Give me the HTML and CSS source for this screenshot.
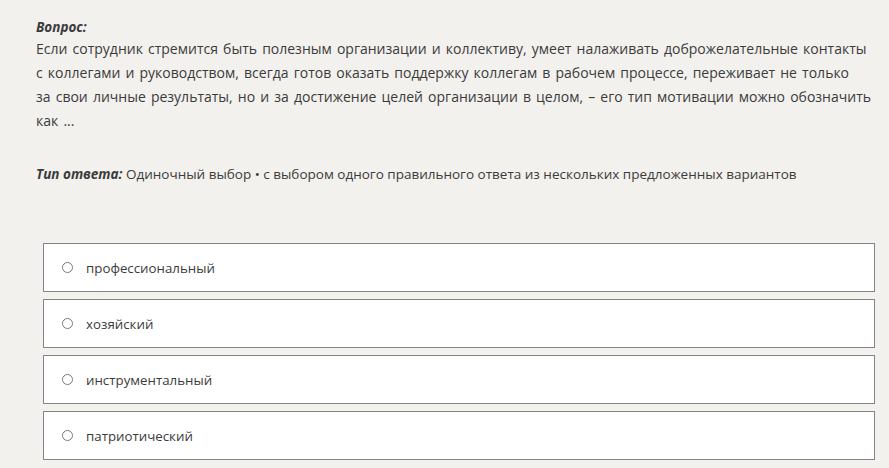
FILE: index.html
```html
<!DOCTYPE html>
<html lang="ru">
<head>
    <meta charset="UTF-8">
    <title>Вопрос</title>
    <link rel="stylesheet" href="styles.css">
</head>
<body>
    <div class="question">
        <div class="label">Вопрос:</div>
        <div class="question-text">Если сотрудник стремится быть полезным организации и коллективу, умеет налаживать доброжелательные контакты<br>
            с коллегами и руководством, всегда готов оказать поддержку коллегам в рабочем процессе, переживает не только<br>
            за свои личные результаты, но и за достижение целей организации в целом, – его тип мотивации можно обозначить<br>
            как ...</div>

        <div class="answer-type"><span class="label">Тип ответа:</span> Одиночный выбор • с выбором одного правильного ответа из нескольких предложенных вариантов</div>
    </div>

    <div class="options">
        <label class="option"><span class="radio"></span>профессиональный</label>
        <label class="option"><span class="radio"></span>хозяйский</label>
        <label class="option"><span class="radio"></span>инструментальный</label>
        <label class="option"><span class="radio"></span>патриотический</label>
    </div>
</body>
</html>
```

FILE: styles.css
```css
body {
    margin: 0;
    background-color: #f2f1ee;
    color: #3b3b3b;
    font-family: "Open Sans", "Noto Sans", sans-serif;
}

.question {
    padding: 17px 0 0 36px;
}

.label {
    font-weight: bold;
    font-style: italic;
    font-size: 13.5px;
    line-height: 20px;
}

.question-text {
    font-size: 14px;
    word-spacing: 1.5px;
    line-height: 24px;
    white-space: nowrap;
}

.answer-type {
    margin-top: 31px;
    font-size: 13.5px;
    line-height: 20px;
}

.answer-type .label {
    font-size: 13.5px;
}

.options {
    margin: 59px 14px 0 43px;
    display: flex;
    flex-direction: column;
    gap: 7px;
}

.option {
    display: flex;
    align-items: center;
    height: 47px;
    background-color: #fff;
    border: 1px solid #858585;
    padding-left: 18px;
    font-size: 13.3px;
}

.radio {
    width: 9px;
    height: 9px;
    border: 1px solid #7a7a7a;
    border-radius: 50%;
    margin-right: 13px;
}
```
